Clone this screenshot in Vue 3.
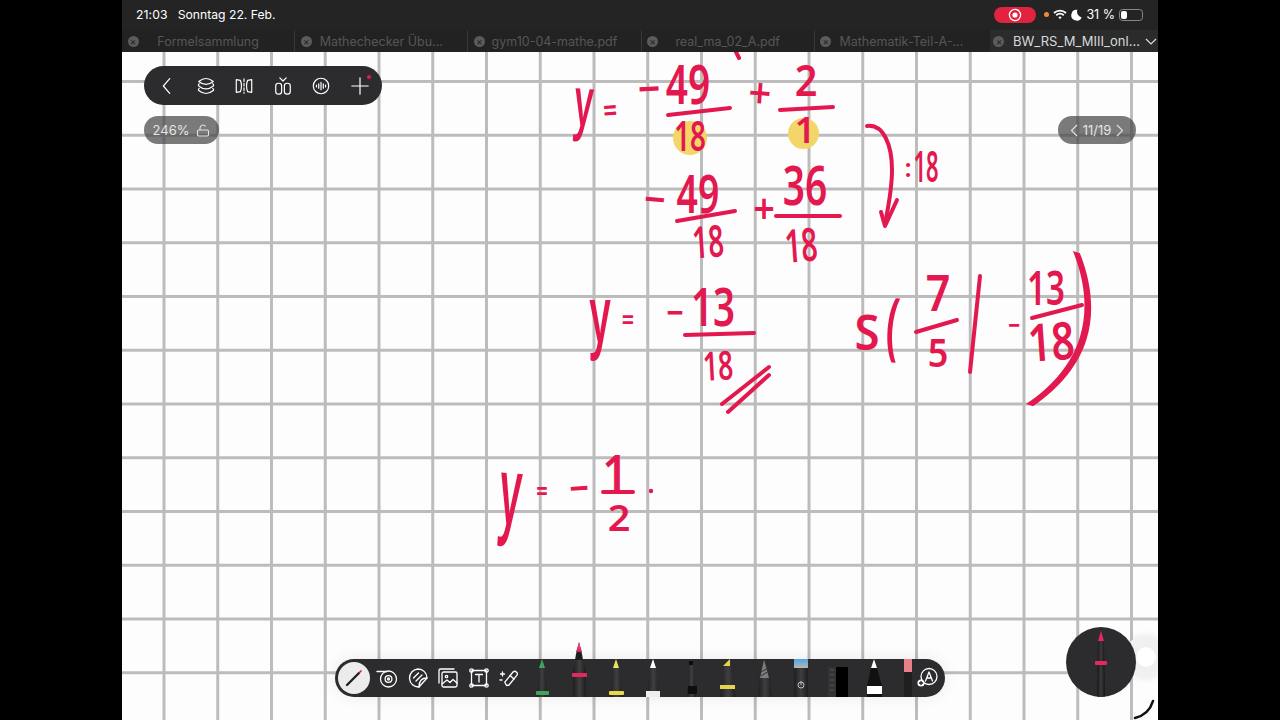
<script setup>
const tabs = [
  { name: 'Formelsammlung' },
  { name: 'Mathechecker Übu...' },
  { name: 'gym10-04-mathe.pdf' },
  { name: 'real_ma_02_A.pdf' },
  { name: 'Mathematik-Teil-A-...' }
]

// Handwritten maths: real text placed freely on the note canvas.
// x, y = centre, s = font size, sx / sy = squeeze, r = rotation
const ink = [
  { t: 'y', x: 584, y: 100, s: 68, sx: 0.5, r: 4 },
  { t: '=', x: 610, y: 110, s: 34, sx: 0.72, r: -4 },
  { t: '−', x: 649, y: 88, s: 44, sx: 0.9, r: -3 },
  { t: '49', x: 688, y: 84, s: 54, sx: 0.72, r: 0 },
  { t: '+', x: 760, y: 92, s: 42, sx: 0.95, r: 4 },
  { t: '2', x: 806, y: 80, s: 44, sx: 0.9, r: 0 },
  { t: '18', x: 690, y: 135, s: 42, sx: 0.66, r: 0 },
  { t: '1', x: 805, y: 130, s: 36, sx: 1, r: 0 },
  { t: '−', x: 655, y: 198, s: 42, sx: 0.9, r: 5 },
  { t: '49', x: 698, y: 193, s: 52, sx: 0.72, r: 0 },
  { t: '+', x: 764, y: 208, s: 42, sx: 0.9, r: 0 },
  { t: '36', x: 805, y: 185, s: 54, sx: 0.72, r: 0 },
  { t: '18', x: 708, y: 241, s: 44, sx: 0.62, r: -4 },
  { t: '18', x: 801, y: 244, s: 46, sx: 0.62, r: -4 },
  { t: ':', x: 908, y: 167, s: 26, sx: 1, r: 0 },
  { t: '18', x: 926, y: 166, s: 44, sx: 0.5, r: 0 },
  { t: 'y', x: 600, y: 313, s: 77, sx: 0.5, r: 0 },
  { t: '=', x: 628, y: 319, s: 30, sx: 0.72, r: 0 },
  { t: '−', x: 675, y: 311, s: 38, sx: 0.8, r: 0 },
  { t: '13', x: 713, y: 306, s: 52, sx: 0.74, r: 0 },
  { t: '18', x: 718, y: 365, s: 40, sx: 0.66, r: -3 },
  { t: 'S', x: 867, y: 332, s: 48, sx: 0.95, r: 0 },
  { t: '(', x: 893, y: 322, s: 66, sx: 0.62, sy: 1.12, r: 4 },
  { t: '7', x: 938, y: 292, s: 50, sx: 0.86, r: 0 },
  { t: '5', x: 938, y: 352, s: 40, sx: 0.9, r: 0 },
  { t: '−', x: 1014, y: 325, s: 30, sx: 0.7, r: 0 },
  { t: '13', x: 1046, y: 287, s: 46, sx: 0.72, r: 0 },
  { t: '18', x: 1051, y: 340, s: 52, sx: 0.78, r: -4 },
  { t: ')', x: 1077, y: 328, s: 176, sx: 1.7, r: 17, thin: true },
  { t: 'y', x: 511, y: 489, s: 94, sx: 0.42, r: 4 },
  { t: '=', x: 542, y: 490, s: 28, sx: 0.72, r: 0 },
  { t: '−', x: 579, y: 487, s: 42, sx: 0.82, r: -4 },
  { t: '1', x: 615, y: 472, s: 50, sx: 0.9, r: 0 },
  { t: '2', x: 619, y: 518, s: 36, sx: 1.1, r: 0 }
]

const inkStyle = (i) => ({
  left: i.x + 'px',
  top: i.y + 'px',
  fontSize: i.s + 'px',
  transform: `translate(-50%, -50%) rotate(${i.r}deg) scale(${i.sx}, ${i.sy || 1})`
})

const strokes = [
  'M668 115 L730 108',
  'M780 110 L833 107',
  'M677 221 L735 211',
  'M776 216 L840 216',
  'M685 335 L754 333',
  'M916 332 L957 320',
  'M1032 318 L1082 305',
  'M722 404 L769 367',
  'M728 412 L769 375',
  'M980 276 L970 372',
  'M735 50 L739 58',
  'M603 492 L633 492',
  'M867 126 C884 124 892 146 892 170 C892 190 888 208 885 224',
  'M881 212 L885 226 L897 200'
]
</script>

<template>
  <div class="stage">
    <main class="screen">
      <header class="chrome">
        <div class="status">
          <div class="clock"><span class="time">21:03</span><span>Sonntag 22. Feb.</span></div>
          <div class="indicators">
            <span class="rec">
              <svg width="14" height="14" viewBox="0 0 14 14"><circle cx="7" cy="7" r="5.6" fill="none" stroke="#fff" stroke-width="1.3"/><circle cx="7" cy="7" r="2.6" fill="#fff"/></svg>
            </span>
            <i class="dot"></i>
            <svg class="wifi" width="14" height="11" viewBox="0 0 14 11"><path d="M1 4 A9 9 0 0 1 13 4 M3.2 6.2 A6 6 0 0 1 10.8 6.2" fill="none" stroke="#fff" stroke-width="1.8"/><path d="M5.3 8 A3 3 0 0 1 8.7 8 L7 10.2 Z" fill="#fff"/></svg>
            <svg width="11" height="12" viewBox="0 0 11 12"><path d="M6.4 .8 A5.4 5.4 0 1 0 10.6 8.4 A5.8 5.8 0 0 1 6.4 .8 Z" fill="#fff"/></svg>
            <span class="pct">31 %</span>
            <span class="battery"><b></b></span>
          </div>
        </div>
        <nav class="tabs">
          <div v-for="tab in tabs" :key="tab.name" class="tab">
            <span class="x">×</span>
            <span class="label">{{ tab.name }}</span>
          </div>
          <div class="tab active">
            <span class="x">×</span>
            <span class="label">BW_RS_M_MIII_onl...</span>
            <svg width="12" height="7" viewBox="0 0 12 7"><path d="M1 1 L6 6 L11 1" fill="none" stroke="#ddd" stroke-width="1.2"/></svg>
          </div>
        </nav>
      </header>

      <section class="page">
        <div class="ink">
          <i class="marker" style="left:673px;top:121px;width:34px;height:34px"></i>
          <i class="marker" style="left:788px;top:118px;width:31px;height:31px"></i>
          <svg class="strokes" width="1280" height="720" viewBox="0 0 1280 720">
            <path v-for="d in strokes" :key="d" :d="d" />
            <circle cx="651" cy="491" r="2.2" fill="#e3184f" stroke="none" />
          </svg>
          <span v-for="(i, n) in ink" :key="n" class="glyph" :class="{ thin: i.thin }" :style="inkStyle(i)">{{ i.t }}</span>
        </div>

        <div class="topbar">
          <svg viewBox="0 0 22 22"><path d="M14 3 L7 11 L14 19"/></svg>
          <svg viewBox="0 0 22 22"><path d="M3 6 Q11 -0.5 19 6 Q11 12.5 3 6 Z"/><path d="M3.6 8.6 Q2 10 3 11 Q11 17.5 19 11 Q20 10 18.4 8.6"/><path d="M3.6 13.6 Q2 15 3 16 Q11 22.5 19 16 Q20 15 18.4 13.6"/></svg>
          <svg viewBox="0 0 22 22"><path d="M2.5 4 L7 4.8 C8.6 8 8.6 14 7 17.2 L2.5 18 Z"/><path d="M19.5 4 L15 4.8 C13.4 8 13.4 14 15 17.2 L19.5 18 Z"/><path d="M11 3 V19" stroke-dasharray="3 2"/></svg>
          <svg viewBox="0 0 22 22"><rect x="3" y="8" width="6.5" height="12" rx="3"/><rect x="12.5" y="8" width="6.5" height="12" rx="3"/><path d="M7.5 2 L11 5.5 L14.5 2"/></svg>
          <svg viewBox="0 0 22 22"><circle cx="11" cy="11" r="8.5"/><path d="M6 10 V12 M8.5 8.5 V13.5 M11 7 V15 M13.5 8.5 V13.5 M16 10 V12"/></svg>
          <span class="plus">
            <svg viewBox="0 0 22 22"><path d="M11 2 V20 M2 11 H20"/></svg>
            <i></i>
          </span>
        </div>

        <div class="pill zoom">
          <span>246%</span>
          <svg width="14" height="13" viewBox="0 0 14 13"><rect x="1.5" y="6" width="11" height="6" rx="1.2"/><path d="M4 6 V4 A3 3 0 0 1 9.6 2.6"/></svg>
        </div>
        <div class="pill pager">
          <svg width="8" height="13" viewBox="0 0 8 13"><path d="M7 1 L1.5 6.5 L7 12"/></svg>
          <span>11/19</span>
          <svg width="8" height="13" viewBox="0 0 8 13"><path d="M1 1 L6.5 6.5 L1 12"/></svg>
        </div>

        <div class="dock">
          <span class="active-tool">
            <svg width="24" height="24" viewBox="0 0 24 24"><path d="M5 19 L17 7" stroke="#222" stroke-width="2.4" stroke-linecap="round"/><path d="M17 7 L19.5 4.5" stroke="#e3184f" stroke-width="1.6"/></svg>
          </span>
          <div class="tools">
            <svg viewBox="0 0 22 22"><circle cx="12.5" cy="12" r="8"/><circle cx="12.5" cy="12" r="3.4"/><circle cx="12.5" cy="12" r="1"/><path d="M1 4.5 H11"/></svg>
            <svg viewBox="0 0 22 22"><path d="M11 2 A9 9 0 0 1 20 11 L12 20 A9 9 0 0 1 11 2 Z"/><path d="M6.5 11 L11.5 6 M9 14 L15 8 M20 11 C15 11 12 14 12 20"/></svg>
            <svg viewBox="0 0 22 22"><path d="M2 16 V3.5 A1.5 1.5 0 0 1 3.5 2 H17"/><rect x="5" y="5" width="15" height="15" rx="1.5"/><circle cx="9.5" cy="9.5" r="1.2"/><path d="M5 17 L10 13 L13 15.5 L16 12.5 L20 16"/></svg>
            <svg viewBox="0 0 22 22"><rect x="3.5" y="3.5" width="15" height="15" rx="1"/><circle cx="3.5" cy="3.5" r="1.7"/><circle cx="18.5" cy="3.5" r="1.7"/><circle cx="3.5" cy="18.5" r="1.7"/><circle cx="18.5" cy="18.5" r="1.7"/><path d="M7.5 7.5 H14.5 M11 7.5 V15"/></svg>
            <svg viewBox="0 0 22 22"><path d="M8.5 18.5 L6.8 15.2 L15 5 A2.6 2.6 0 0 1 19 8.2 L11 18 Z"/><path d="M12 8.5 L16 12 M4.5 5 V9 M2.5 7 H6.5 M2 13 H4"/></svg>
          </div>

          <svg class="tray" width="392" height="38" viewBox="525 659 392 38">
            <defs>
              <linearGradient id="body" x1="0" x2="1" y1="0" y2="0">
                <stop offset="0" stop-color="#1e1e1f"/>
                <stop offset=".5" stop-color="#3f3f41"/>
                <stop offset="1" stop-color="#1e1e1f"/>
              </linearGradient>
              <linearGradient id="blue" x1="0" x2="0" y1="0" y2="1">
                <stop offset="0" stop-color="#4da3f0"/>
                <stop offset="1" stop-color="#b8b8a8"/>
              </linearGradient>
              <linearGradient id="tip" x1="0" x2="0" y1="0" y2="1">
                <stop offset="0" stop-color="#ff5a8c"/>
                <stop offset="1" stop-color="#c9265a"/>
              </linearGradient>
            </defs>
            <!-- green pen -->
            <path d="M541 659 L544 668 L546 697 H536 L538 668 Z" fill="url(#body)"/>
            <path d="M541 659 L544 668 H538 Z" fill="#3fa35a"/>
            <rect x="535" y="691" width="13" height="4" rx="1" fill="#3fa35a"/>
            <!-- pink pen -->
            <path d="M578 655 L585 668 V697 H572 V668 Z" fill="url(#body)"/>
            <path d="M578 642 L581 654 L582 660 H574 L575 654 Z" fill="#1f1f20"/>
            <path d="M578 642 L581 652 H575 Z" fill="url(#tip)"/>
            <rect x="571" y="673" width="15" height="4" rx="1" fill="#e3285f"/>
            <!-- yellow pen -->
            <path d="M615 659 L618 668 L622 697 H609 L612 668 Z" fill="url(#body)"/>
            <path d="M615 659 L618 668 H612 Z" fill="#e8e45c"/>
            <rect x="608" y="691" width="15" height="4" rx="1" fill="#e8d94a"/>
            <!-- white pen -->
            <path d="M652 659 L655 668 L659 697 H646 L649 668 Z" fill="url(#body)"/>
            <path d="M652 659 L655 668 H649 Z" fill="#fff"/>
            <rect x="645" y="691" width="14" height="6" fill="#eee"/>
            <!-- fineliner -->
            <path d="M690 659 L693 664 L695 697 H686 L688 664 Z" fill="url(#body)"/>
            <rect x="688" y="661" width="4" height="4" fill="#0b0b0b"/>
            <rect x="687" y="686" width="9" height="8" fill="#0e0e0e"/>
            <!-- highlighter -->
            <path d="M721 666 L730 659 V672 L735 697 H719 L722 672 Z" fill="url(#body)"/>
            <path d="M722 666 L729 659 V666 Z" fill="#e6d24e"/>
            <rect x="719" y="685" width="15" height="4" fill="#e6d24e"/>
            <!-- pencil -->
            <path d="M763 660 L768 672 L771 697 H757 L759 672 Z" fill="url(#body)"/>
            <path d="M763 660 L768 678 H759 Z" fill="#7d7d7d"/>
            <path d="M760 672 L767 668 M760 676 L768 671" stroke="#333" stroke-width="1"/>
            <!-- blue tool -->
            <rect x="793" y="659" width="14" height="38" fill="url(#body)"/>
            <rect x="793" y="659" width="14" height="9" fill="url(#blue)"/>
            <circle cx="800" cy="685" r="3" fill="none" stroke="#bbb" stroke-width="1"/>
            <path d="M800 681 V685" stroke="#bbb" stroke-width="1"/>
            <!-- ruler -->
            <rect x="827" y="667" width="8" height="30" fill="#343436"/>
            <path d="M829 670 H833 M829 675 H833 M829 680 H833 M829 685 H833 M829 690 H833" stroke="#555" stroke-width="1"/>
            <rect x="835" y="667" width="12" height="30" fill="#000"/>
            <!-- white fineliner -->
            <path d="M873 659 L876 668 L881 686 V697 H866 V686 L870 668 Z" fill="#111"/>
            <path d="M873 659 L876 668 H870 Z" fill="#fff"/>
            <rect x="866" y="686" width="15" height="8" fill="#fff"/>
            <!-- eraser -->
            <rect x="903" y="659" width="8" height="38" fill="#1f1f20"/>
            <rect x="903" y="659" width="8" height="13" fill="#e98089"/>
          </svg>

          <svg class="shapes" viewBox="0 0 22 22"><circle cx="13" cy="9.5" r="8"/><path d="M9.5 14 L13 5 L16.5 14 M10.7 11 H15.3"/><circle cx="5" cy="16" r="3.6" fill="#fff" stroke="none"/><path d="M3.4 16 H6.6 M5 14.4 V17.6" stroke="#222"/></svg>
        </div>

        <div class="bubble">
          <svg width="70" height="70" viewBox="0 0 70 70">
            <defs>
              <linearGradient id="bubbleBody" x1="0" x2="1" y1="0" y2="0">
                <stop offset="0" stop-color="#151515"/>
                <stop offset=".5" stop-color="#3b3b3d"/>
                <stop offset="1" stop-color="#151515"/>
              </linearGradient>
            </defs>
            <path d="M35 4 L38 14 L39 70 H31 L32 14 Z" fill="url(#bubbleBody)"/>
            <path d="M35 4 L38 14 H32 Z" fill="#e3285f"/>
            <rect x="29" y="34" width="12" height="4" rx="1" fill="#e3285f"/>
          </svg>
        </div>
        <i class="ghost"></i>
        <svg class="arc" width="24" height="24" viewBox="0 0 24 24"><path d="M2 22 C10 20 17 15 20 5" fill="none" stroke="#111" stroke-width="2.6" stroke-linecap="round"/></svg>
      </section>
    </main>
  </div>
</template>

<style>
html, body { margin: 0; background: #000; }
</style>

<style scoped>
.stage {
  width: 1280px;
  height: 720px;
  background: #000;
  display: flex;
  justify-content: center;
  overflow: hidden;
  font-family: Inter, "Noto Sans", sans-serif;
}
.screen {
  width: 1036px;
  height: 720px;
  display: flex;
  flex-direction: column;
}
.chrome { background: #242425; color: #fff; flex: none; }
.status {
  height: 30px;
  display: flex;
  align-items: center;
  justify-content: space-between;
  padding: 0 15px 1px 14px;
  box-sizing: border-box;
  font-size: 12.2px;
}
.clock { display: flex; gap: 10px; }
.time { letter-spacing: .1px; }
.indicators { display: flex; align-items: center; gap: 4px; }
.rec {
  width: 42px;
  height: 16px;
  border-radius: 8px;
  background: #e2233f;
  display: flex;
  align-items: center;
  justify-content: center;
  margin-right: 4px;
}
.dot { width: 5px; height: 5px; border-radius: 50%; background: #ee8a3c; }
.pct { font-size: 12.5px; }
.battery {
  width: 20px;
  height: 8px;
  border: 1px solid #888;
  border-radius: 3.5px;
  padding: 1px;
  display: block;
}
.battery b { display: block; width: 6px; height: 8px; background: #fff; border-radius: 2px; }
.tabs { height: 22px; display: flex; background: #222223; }
.tab {
  width: 173.2px;
  flex: none;
  display: grid;
  grid-template-columns: 22px 1fr 22px;
  align-items: center;
  box-sizing: border-box;
  border-right: 1px solid #383838;
  color: #565656;
  font-size: 12.5px;
}
.tab:nth-child(5) { border-right: 0; }
.label { text-align: center; white-space: nowrap; justify-self: center; grid-column: 2; }
.x {
  width: 11px;
  height: 11px;
  border-radius: 50%;
  background: #5b5b5b;
  color: #222;
  font-size: 10px;
  line-height: 11px;
  text-align: center;
  justify-self: center;
}
.tab.active {
  width: 168px;
  margin-left: 2px;
  background: #2b2b2c;
  color: #d9d9d9;
  border: 0;
  font-size: 13px;
  grid-template-columns: 18px 1fr 12px;
  padding-right: 1px;
}
.page {
  flex: 1;
  position: relative;
  overflow: hidden;
  background-color: #fdfdfd;
  background-image:
    linear-gradient(to right, #bcbcbc 3px, transparent 3px),
    linear-gradient(to bottom, #bcbcbc 3px, transparent 3px);
  background-size: 53.75px 53.75px;
  background-position: 40.5px 0, 0 28px;
}
.ink {
  position: absolute;
  left: -122px;
  top: -52px;
  width: 1280px;
  height: 720px;
}
.marker {
  position: absolute;
  border-radius: 50%;
  background: #f3d668;
}
.strokes {
  position: absolute;
  left: 0;
  top: 0;
}
.strokes path {
  fill: none;
  stroke: #e3184f;
  stroke-width: 4;
  stroke-linecap: round;
  stroke-linejoin: round;
}
.glyph {
  position: absolute;
  color: #e3184f;
  line-height: .8;
  white-space: nowrap;
  font-family: "Noto Sans", sans-serif;
  font-weight: 600;
  transform-origin: center;
}
.glyph.thin {
  font-family: Inter, sans-serif;
  font-weight: 100;
}
.topbar {
  position: absolute;
  left: 22px;
  top: 14px;
  width: 238px;
  height: 39px;
  box-sizing: border-box;
  padding: 0 12px 0 13px;
  border-radius: 20px;
  background: #2c2c2e;
  display: flex;
  align-items: center;
  justify-content: space-between;
}
.topbar svg { width: 20px; height: 20px; display: block; }
.topbar svg, .tools svg, .shapes {
  fill: none;
  stroke: #fff;
  stroke-width: 1.3;
  stroke-linecap: round;
  stroke-linejoin: round;
}
.plus { position: relative; display: block; }
.plus i {
  position: absolute;
  right: -1px;
  top: -1px;
  width: 4px;
  height: 4px;
  border-radius: 50%;
  background: #e3184f;
}
.pill {
  position: absolute;
  top: 64px;
  height: 28px;
  border-radius: 14px;
  background: rgba(70, 70, 70, .72);
  color: #e4e4e4;
  font-size: 13px;
  display: flex;
  align-items: center;
  justify-content: center;
  box-sizing: border-box;
}
.pill svg { fill: none; stroke: #e4e4e4; stroke-width: 1.1; }
.zoom { left: 22px; width: 75px; gap: 7px; }
.pager { left: 936px; width: 78px; gap: 5px; }
.dock {
  position: absolute;
  left: 213px;
  top: 607px;
  width: 610px;
  height: 38px;
  border-radius: 19px;
  background: #2c2c2e;
  display: flex;
  align-items: center;
  padding-left: 3px;
  box-sizing: border-box;
  box-shadow: 0 0 16px rgba(0, 0, 0, .08);
}
.active-tool {
  width: 32px;
  height: 32px;
  border-radius: 50%;
  background: #ececec;
  display: flex;
  align-items: center;
  justify-content: center;
  flex: none;
}
.tools { display: flex; gap: 8.5px; margin-left: 6px; flex: none; }
.tools svg { width: 22px; height: 22px; display: block; }
.tray { margin-left: 6px; overflow: visible; flex: none; display: block; }
.shapes { width: 22px; height: 22px; margin-left: -2px; flex: none; }
.bubble {
  position: absolute;
  left: 944px;
  top: 575px;
  width: 70px;
  height: 70px;
  border-radius: 50%;
  background: #2c2c2e;
  overflow: hidden;
  z-index: 2;
}
.bubble svg { display: block; }
.ghost {
  position: absolute;
  left: 1002px;
  top: 583px;
  width: 44px;
  height: 44px;
  border-radius: 50%;
  background: radial-gradient(circle, #fff 30%, #efefef 32%, #f4f4f4 100%);
  box-shadow: 0 0 6px rgba(0, 0, 0, .08);
}
.arc { position: absolute; left: 1011px; top: 644px; }
</style>
